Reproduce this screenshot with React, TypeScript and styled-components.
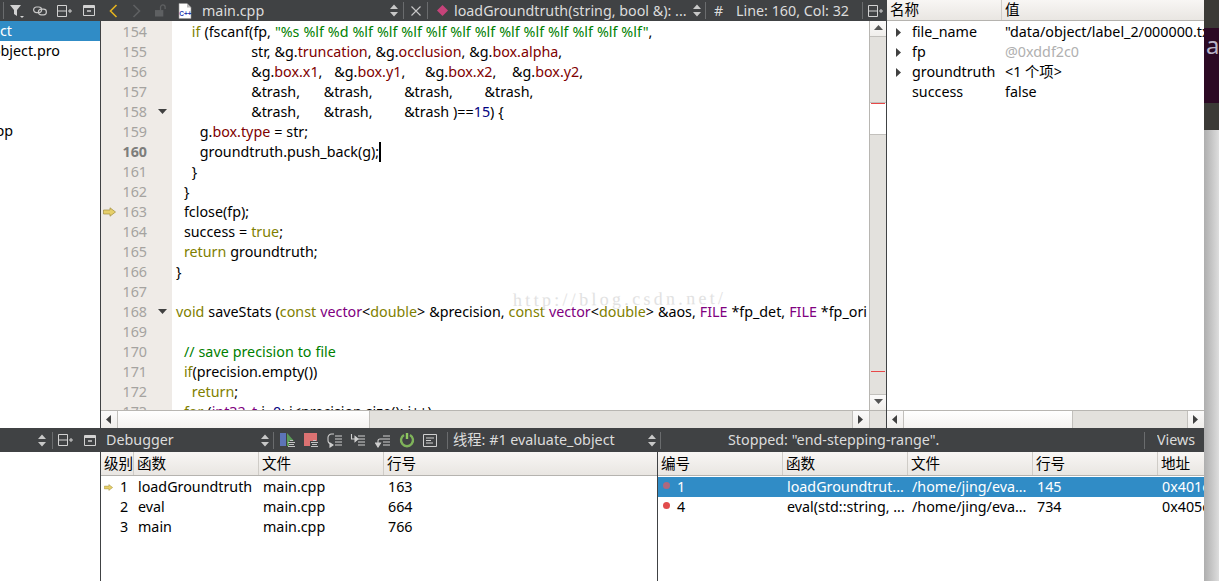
import React from "react";
import styled, { createGlobalStyle } from "styled-components";

const Global = createGlobalStyle`
  html, body { margin: 0; padding: 0; background: #fff; }
  #root { width: 1219px; height: 581px; overflow: hidden; }
  * { box-sizing: border-box; }
`;

const DARK = "#404244";
const FONT = `"Noto Sans", "Noto Sans CJK SC", sans-serif`;

const Shell = styled.div`
  display: flex;
  width: 1219px;
  height: 581px;
  overflow: hidden;
  font-family: ${FONT};
  font-size: 14.3px;
  color: #000;
`;
const Window = styled.div`
  width: 1204px;
  height: 581px;
  display: flex;
  flex-direction: column;
  position: relative;
`;
const TopRow = styled.div`
  display: flex;
  height: 428px;
`;
const BottomRow = styled.div`
  display: flex;
  flex: 1;
  min-height: 0;
`;
const Sidebar = styled.div`
  width: 101px;
  display: flex;
  flex-direction: column;
  border-right: 1px solid ${DARK};
`;
const Toolbar = styled.div<{ $h?: number }>`
  height: ${(p) => p.$h ?? 21}px;
  background: ${DARK};
  display: flex;
  align-items: center;
  color: #dcdcdc;
  flex: none;
  white-space: pre;
  line-height: 20px;
  overflow: hidden;
`;
const BottomBar = styled(Toolbar)`
  width: 1204px;
`;
const Sep = styled.span<{ $ml: number }>`
  width: 1px;
  height: 17px;
  background: #6a6c6e;
  margin-left: ${(p) => p.$ml}px;
  flex: none;
`;
const Tool = styled.span<{ $ml: number; $w: number }>`
  display: flex;
  align-items: center;
  justify-content: center;
  flex: none;
  width: ${(p) => p.$w}px;
  margin-left: ${(p) => p.$ml}px;
`;
const ToolText = styled.span<{ $ml: number; $w: number }>`
  flex: none;
  overflow: hidden;
  width: ${(p) => p.$w}px;
  margin-left: ${(p) => p.$ml}px;
`;
const ProjectRow = styled.div<{ $selected?: boolean; $pad: number }>`
  height: 20px;
  line-height: 20px;
  display: flex;
  justify-content: flex-end;
  padding-right: ${(p) => p.$pad}px;
  white-space: pre;
  overflow: hidden;
  background: ${(p) => (p.$selected ? "#308cc6" : "transparent")};
  color: ${(p) => (p.$selected ? "#fff" : "#000")};
`;

const EditorPane = styled.div`
  width: 786px;
  display: flex;
  flex-direction: column;
  border-right: 1px solid ${DARK};
`;
const EditorBody = styled.div`
  flex: 1;
  min-height: 0;
  display: flex;
`;
const CodeArea = styled.div`
  flex: 1;
  min-width: 0;
  overflow: hidden;
  padding-top: 1px;
  background: linear-gradient(90deg, #efebe7 71px, #fff 71px);
  position: relative;
`;
const CodeLine = styled.div`
  display: flex;
  height: 20px;
  line-height: 20px;
  white-space: pre;
  word-spacing: 0.24px;
`;
const Marker = styled.span`
  width: 15px;
  flex: none;
  display: flex;
  align-items: center;
  justify-content: flex-end;
`;
const LineNo = styled.span<{ $current?: boolean }>`
  width: 31px;
  flex: none;
  text-align: right;
  font-weight: ${(p) => (p.$current ? 700 : 400)};
  color: ${(p) => (p.$current ? "#7d7d7b" : "#a5a3a0")};
`;
const Fold = styled.span`
  width: 25px;
  flex: none;
  display: flex;
  align-items: center;
  justify-content: flex-end;
  padding-right: 5px;
`;
const Code = styled.span`
  padding-left: 4px;
  flex: none;
`;
const COLORS: Record<string, string> = {
  k: "#808000",
  t: "#800080",
  s: "#008000",
  m: "#800000",
  n: "#000080",
  p: "#000",
};
const Tok = styled.span<{ $c: string }>`
  color: ${(p) => COLORS[p.$c]};
`;
const Caret = styled.span`
  display: inline-block;
  width: 2px;
  height: 20px;
  margin-right: -2px;
  background: #000;
  vertical-align: top;
`;
const Watermark = styled.div`
  position: absolute;
  left: 412px;
  top: 268px;
  font-family: "Liberation Serif", serif;
  font-size: 18px;
  letter-spacing: 3.3px;
  line-height: 20px;
  color: #e2e2e2;
  white-space: pre;
  pointer-events: none;
  transform: rotate(-0.6deg);
`;
const VScroll = styled.div`
  width: 17px;
  flex: none;
  display: flex;
  flex-direction: column;
  background: #e3e1dd;
  border-left: 1px solid #b8b6b2;
  position: relative;
`;
const ScrollBtn = styled.div<{ $side: string }>`
  flex: none;
  background: linear-gradient(#fbfafa, #f0eeeb);
  display: flex;
  align-items: center;
  justify-content: center;
  ${(p) => `border-${p.$side}: 1px solid #c2c0bc;`}
  ${(p) => (p.$side === "top" || p.$side === "bottom" ? "height: 16px;" : "width: 17px;")}
`;
const VTrack = styled.div<{ $size: number }>`
  flex: ${(p) => (p.$size ? "none" : 1)};
  height: ${(p) => (p.$size ? `${p.$size}px` : "auto")};
`;
const VHandle = styled.div`
  height: 33px;
  flex: none;
  background: #fff;
  border-top: 1px solid #c2c0bc;
  border-bottom: 1px solid #c2c0bc;
`;
const Mark = styled.div<{ $top: number }>`
  position: absolute;
  left: 1px;
  right: 1px;
  height: 1px;
  top: ${(p) => p.$top}px;
  background: #e84848;
`;
const HScroll = styled.div`
  height: 18px;
  flex: none;
  display: flex;
  background: #e3e1dd;
  border-top: 1px solid #b8b6b2;
`;
const HHandle = styled.div<{ $w: number }>`
  width: ${(p) => p.$w}px;
  flex: none;
  background: linear-gradient(#fff, #f4f2f0);
  border-right: 1px solid #c2c0bc;
`;
const HTrack = styled.div`
  flex: 1;
`;
const Corner = styled.div`
  width: 17px;
  flex: none;
  border-left: 1px solid #c2c0bc;
`;

const LocalsPane = styled.div`
  width: 317px;
  display: flex;
  flex-direction: column;
`;
const TableHead = styled.div<{ $cols: string; $h: number }>`
  display: grid;
  grid-template-columns: ${(p) => p.$cols};
  height: ${(p) => p.$h}px;
  flex: none;
  background: linear-gradient(#f8f6f4, #e9e6e2);
  border-bottom: 1px solid #b5b3af;
  line-height: ${(p) => p.$h - 2}px;
  font-size: 14.6px;
`;
const HeadCell = styled.div`
  padding-left: 3px;
  border-right: 1px solid #cfccc7;
  white-space: pre;
  overflow: hidden;
  &:last-child { border-right: none; }
`;
const TableBody = styled.div`
  flex: 1;
  min-height: 0;
  overflow: hidden;
  padding-top: 1px;
`;
const Row = styled.div<{ $cols: string; $selected?: boolean }>`
  display: grid;
  grid-template-columns: ${(p) => p.$cols};
  height: 20px;
  line-height: 20px;
  white-space: pre;
  background: ${(p) => (p.$selected ? "#308cc6" : "transparent")};
  color: ${(p) => (p.$selected ? "#fff" : "#000")};
`;
const Cell = styled.div<{ $pl?: number; $dim?: boolean }>`
  padding-left: ${(p) => p.$pl ?? 4}px;
  overflow: hidden;
  display: flex;
  align-items: center;
  color: ${(p) => (p.$dim ? "#b0b0b0" : "inherit")};
`;
const Twisty = styled.span`
  display: flex;
  width: 25px;
  flex: none;
  padding-left: 8px;
`;
const StackPane = styled.div`
  width: 557px;
  display: flex;
  flex-direction: column;
  border-right: 1px solid ${DARK};
`;
const BreakPane = styled.div`
  width: 546px;
  display: flex;
  flex-direction: column;
`;
const Blank = styled.div`
  width: 101px;
  border-right: 1px solid ${DARK};
`;
const Strip = styled.div`
  width: 15px;
  height: 581px;
  flex: none;
  display: flex;
  flex-direction: column;
  overflow: hidden;
`;
const StripDark = styled.div<{ $h: number }>`
  height: ${(p) => p.$h}px;
  flex: none;
  background: #3b3a36;
`;
const StripPurple = styled.div`
  height: 75px;
  flex: none;
  background: #2c0a24;
  color: #b9b3c6;
  font-size: 24px;
  line-height: 34px;
  padding-left: 2px;
  overflow: hidden;
  white-space: pre-line;
`;
const StripLight = styled.div`
  flex: 1;
  background: linear-gradient(90deg, #aeaeae, #dddddd);
`;

/* icons */
const Updown = () => (
  <svg width="8" height="13" viewBox="0 0 8 13"><path d="M4 0.5 8 5H0zM4 12.5 0 8h8z" fill="#c8c8c8" /></svg>
);
const Split = () => (
  <svg width="15" height="14" viewBox="0 0 15 14" fill="none" stroke="#d2d2d2"><path d="M.5 1.5h9v11h-9zM.5 7h9M11 7h4M13 5v4" /></svg>
);
const Collapse = () => (
  <svg width="12" height="11" viewBox="0 0 12 11" fill="none"><path d="M.5.5h11v10H.5z" stroke="#d2d2d2" /><path d="M1 1h10v2H1z" fill="#d2d2d2" /><path d="M4 6h4" stroke="#d2d2d2" strokeWidth="1.5" /></svg>
);
const Funnel = () => (
  <svg width="14" height="14" viewBox="0 0 14 14"><path d="M0 1h11L7 6v6L4 10V6z" fill="#d2d2d2" /><path d="M10 12h4l-2 2z" fill="#d2d2d2" /></svg>
);
const Link = () => (
  <svg width="14" height="10" viewBox="0 0 14 10" fill="none" stroke="#c8c8c8" strokeWidth="1.2"><rect x=".6" y="1" width="8" height="5.6" rx="2.8" /><rect x="5.4" y="3.2" width="8" height="5.6" rx="2.8" /></svg>
);
const Chevron = ({ dir, color }: { dir: "l" | "r"; color: string }) => (
  <svg width="9" height="14" viewBox="0 0 9 14" fill="none" stroke={color} strokeWidth="1.6"><path d={dir === "l" ? "M7.5 1 1.5 7l6 6" : "M1.5 1l6 6-6 6"} /></svg>
);
const Lock = () => (
  <svg width="13" height="13" viewBox="0 0 13 13"><path d="M0 6h9v7H0z" fill="#5e6062" /><path d="M6 6V3a2.5 2.5 0 0 1 5 0v2" fill="none" stroke="#5e6062" strokeWidth="1.4" /></svg>
);
const CppDoc = () => (
  <svg width="14" height="16" viewBox="0 0 14 16"><path d="M1 .5h8l4 4v11H1z" fill="#fff" stroke="#999" strokeWidth=".6" /><path d="M9 .5v4h4z" fill="#bbb" /><text x="1.2" y="12.5" fontSize="6.5" fontWeight="700" fill="#2a3fb0" fontFamily="Liberation Sans">C++</text></svg>
);
const XIcon = () => (
  <svg width="10" height="10" viewBox="0 0 10 10" stroke="#c8c8c8" strokeWidth="1.1"><path d="M.5.5l9 9M9.5.5l-9 9" /></svg>
);
const Diamond = () => (
  <svg width="11" height="11" viewBox="0 0 11 11"><path d="M5.5 0 11 5.5 5.5 11 0 5.5z" fill="#c6437a" /></svg>
);
const Bug = ({ x, y }: { x: number; y: number }) => (
  <path transform={`translate(${x} ${y})`} d="M2 0h3v1H2zM0 2h7v1H0zM1 4h5v1H1zM0 6h7v1H0z" fill="#c4c4c4" />
);
const DbgContinue = () => (
  <svg width="16" height="16" viewBox="0 0 16 16"><path d="M0 1h6v13H0z" fill="#5d74b8" /><path d="M7 1l7 8H7z" fill="#5a9a58" /><path d="M7 9h2v5H7z" fill="#5a9a58" /><Bug x={8} y={8} /></svg>
);
const DbgStop = () => (
  <svg width="15" height="16" viewBox="0 0 15 16"><path d="M0 1h13v13H0z" fill="#dc7272" /><path d="M6 9h8v6H6z" fill={DARK} /><Bug x={7} y={8} /></svg>
);
const lines = "M8 3h7M8 6h7M8 9h7M8 12h7";
const StepOver = () => (
  <svg width="16" height="15" viewBox="0 0 16 15" fill="none" stroke="#cfcfcf" strokeWidth="1.1"><path d={lines} /><path d="M7 1H4.5A3.5 3.5 0 0 0 1 4.5V7a4 4 0 0 0 3 4" /><path d="M3 14l3-2-3-2z" fill="#cfcfcf" /></svg>
);
const StepInto = () => (
  <svg width="16" height="15" viewBox="0 0 16 15" fill="none" stroke="#cfcfcf" strokeWidth="1.1"><path d={lines} /><path d="M1.5 1v5h4" /><path d="M5 3.5 8 6 5 8.5z" fill="#cfcfcf" /></svg>
);
const StepOut = () => (
  <svg width="16" height="15" viewBox="0 0 16 15" fill="none" stroke="#cfcfcf" strokeWidth="1.1"><path d={lines} /><path d="M8 6H5a2 2 0 0 0-2 2v4" /><path d="M.5 10l2.500 4 2.500-4z" fill="#cfcfcf" /></svg>
);
const Power = () => (
  <svg width="16" height="16" viewBox="0 0 16 16" fill="none"><path d="M5 3a6 6 0 1 0 6 0" stroke="#7fb35a" strokeWidth="2.4" /><path d="M8 1v6" stroke="#8fc860" strokeWidth="2.4" /></svg>
);
const Frames = () => (
  <svg width="14" height="13" viewBox="0 0 14 13" fill="none" stroke="#cfcfcf"><path d="M.5.5h13v12H.5z" /><path d="M3 4h8M3 6.5h5M3 9h7" /></svg>
);
const Arrow = ({ dir, color = "#404040" }: { dir: "l" | "r" | "u" | "d"; color?: string }) => {
  const d = { l: "M6 0v9L1 4.5z", r: "M1 0v9l5-4.5z", u: "M0 6h9L4.5 1z", d: "M0 1h9L4.5 6z" }[dir];
  return <svg width="9" height="9" viewBox="0 0 9 9"><path d={d} fill={color} /></svg>;
};
const PointerArrow = ({ w, h }: { w: number; h: number }) => (
  <svg width={w} height={h} viewBox="0 0 13 10"><path d="M.5 3H7V.8L12.5 5 7 9.2V7H.5z" fill="#e6cf6a" stroke="#a08c3c" strokeWidth=".7" /></svg>
);
const Dot = styled.span<{ $dim?: boolean }>`
  width: 7px;
  height: 7px;
  border-radius: 50%;
  flex: none;
  margin-bottom: 3px;
  background: ${(p) => (p.$dim ? "#b0687e" : "#e24c4c")};
`;
const DotCell = styled.div`
  display: flex;
  align-items: center;
  gap: 7px;
  padding-left: 5px;
`;
const ArrowCell = styled.div`
  display: flex;
  align-items: center;
  padding-left: 3px;
  gap: 7px;
`;
const ArrowSlot = styled.span`
  width: 9px;
  flex: none;
  display: flex;
  align-items: center;
`;

type T = [string, keyof typeof COLORS];
const sp = (n: number) => " ".repeat(n);
const CODE: { n: number; t: T[]; fold?: boolean; pointer?: boolean; caret?: boolean }[] = [
  { n: 154, t: [[sp(4), "p"], ["if", "k"], [" (fscanf(fp, ", "p"], ['"%s %lf %d %lf %lf %lf %lf %lf %lf %lf %lf %lf %lf %lf %lf"', "s"], [",", "p"]] },
  { n: 155, t: [[sp(19) + "str, &g.", "p"], ["truncation", "m"], [", &g.", "p"], ["occlusion", "m"], [", &g.", "p"], ["box.alpha", "m"], [",", "p"]] },
  { n: 156, t: [[sp(19) + "&g.", "p"], ["box.x1", "m"], [",   &g.", "p"], ["box.y1", "m"], [",     &g.", "p"], ["box.x2", "m"], [",    &g.", "p"], ["box.y2", "m"], [",", "p"]] },
  { n: 157, t: [[sp(19) + "&trash,      &trash,        &trash,        &trash,", "p"]] },
  { n: 158, fold: true, t: [[sp(19) + "&trash,      &trash,        &trash )==", "p"], ["15", "n"], [") {", "p"]] },
  { n: 159, t: [[sp(6) + "g.", "p"], ["box.type", "m"], [" = str;", "p"]] },
  { n: 160, caret: true, t: [[sp(6) + "groundtruth.push_back(g);", "p"]] },
  { n: 161, t: [[sp(4) + "}", "p"]] },
  { n: 162, t: [[sp(2) + "}", "p"]] },
  { n: 163, pointer: true, t: [[sp(2) + "fclose(fp);", "p"]] },
  { n: 164, t: [[sp(2) + "success = ", "p"], ["true", "k"], [";", "p"]] },
  { n: 165, t: [[sp(2), "p"], ["return", "k"], [" groundtruth;", "p"]] },
  { n: 166, t: [["}", "p"]] },
  { n: 167, t: [] },
  { n: 168, fold: true, t: [["void", "k"], [" saveStats (", "p"], ["const", "k"], [" ", "p"], ["vector", "t"], ["<", "p"], ["double", "k"], ["> &precision, ", "p"], ["const", "k"], [" ", "p"], ["vector", "t"], ["<", "p"], ["double", "k"], ["> &aos, ", "p"], ["FILE", "t"], [" *fp_det, ", "p"], ["FILE", "t"], [" *fp_ori", "p"]] },
  { n: 169, t: [] },
  { n: 170, t: [[sp(2), "p"], ["// save precision to file", "s"]] },
  { n: 171, t: [[sp(2), "p"], ["if", "k"], ["(precision.empty())", "p"]] },
  { n: 172, t: [[sp(4), "p"], ["return", "k"], [";", "p"]] },
  { n: 173, t: [[sp(2), "p"], ["for", "k"], [" (", "p"], ["int32_t", "t"], [" i=", "p"], ["0", "n"], ["; i<precision.size(); i++)", "p"]] },
];

const STACK_COLS = "33px 125px 125px 1fr";
const STACK_ROWS = [
  { l: "1", f: "loadGroundtruth", line: "163", ptr: true },
  { l: "2", f: "eval", line: "664" },
  { l: "3", f: "main", line: "766" },
];
const BP_COLS = "125px 125px 125px 125px 1fr";
const LOCAL_COLS = "115px 1fr";
const LOCALS = [
  { n: "file_name", v: '"data/object/label_2/000000.txt"', kids: true },
  { n: "fp", v: "@0xddf2c0", kids: true, dim: true },
  { n: "groundtruth", v: "<1 个项>", kids: true },
  { n: "success", v: "false" },
];

export default function App() {
  return (
    <Shell>
      <Global />
      <Window>
        <TopRow>
          <Sidebar>
            <Toolbar>
              <Sep $ml={3} />
              <Tool $ml={6} $w={14}><Funnel /></Tool>
              <Tool $ml={9} $w={14}><Link /></Tool>
              <Tool $ml={10} $w={15}><Split /></Tool>
              <Tool $ml={11} $w={12}><Collapse /></Tool>
            </Toolbar>
            <ProjectRow $selected $pad={88}>evaluate_object</ProjectRow>
            <ProjectRow $pad={40}>evaluate_object.pro</ProjectRow>
            <ProjectRow $pad={0}> </ProjectRow>
            <ProjectRow $pad={0}> </ProjectRow>
            <ProjectRow $pad={0}> </ProjectRow>
            <ProjectRow $pad={87}>main.cpp</ProjectRow>
          </Sidebar>
          <EditorPane>
            <Toolbar>
              <Tool $ml={7} $w={10}><Chevron dir="l" color="#e3b21f" /></Tool>
              <Tool $ml={13} $w={10}><Chevron dir="r" color="#5e6062" /></Tool>
              <Tool $ml={14} $w={12}><Lock /></Tool>
              <Tool $ml={11} $w={14}><CppDoc /></Tool>
              <ToolText $ml={10} $w={186}>main.cpp</ToolText>
              <Tool $ml={2} $w={8}><Updown /></Tool>
              <Sep $ml={5} />
              <Tool $ml={7} $w={10}><XIcon /></Tool>
              <Sep $ml={6} />
              <Tool $ml={9} $w={11}><Diamond /></Tool>
              <ToolText $ml={6} $w={238}>loadGroundtruth(string, bool &amp;): ...</ToolText>
              <Tool $ml={1} $w={8}><Updown /></Tool>
              <Sep $ml={4} />
              <ToolText $ml={8} $w={10}>#</ToolText>
              <ToolText $ml={12} $w={126}>Line: 160, Col: 32</ToolText>
              <Sep $ml={0} />
              <Tool $ml={5} $w={15}><Split /></Tool>
            </Toolbar>
            <EditorBody>
              <CodeArea>
                {CODE.map((l) => (
                  <CodeLine key={l.n}>
                    <Marker>{l.pointer && <PointerArrow w={13} h={10} />}</Marker>
                    <LineNo $current={l.caret}>{l.n}</LineNo>
                    <Fold>{l.fold && <Arrow dir="d" />}</Fold>
                    <Code>
                      {l.t.map((t, i) => (
                        <Tok key={i} $c={t[1]}>{t[0]}</Tok>
                      ))}
                      {l.caret && <Caret />}
                    </Code>
                  </CodeLine>
                ))}
                <Watermark>http://blog.csdn.net/</Watermark>
              </CodeArea>
              <VScroll>
                <ScrollBtn $side="bottom"><Arrow dir="u" color="#555" /></ScrollBtn>
                <VTrack $size={65} />
                <VHandle />
                <VTrack $size={0} />
                <ScrollBtn $side="top"><Arrow dir="d" color="#555" /></ScrollBtn>
                <Mark $top={82} />
                <Mark $top={350} />
              </VScroll>
            </EditorBody>
            <HScroll>
              <ScrollBtn $side="right"><Arrow dir="l" /></ScrollBtn>
              <HHandle $w={252} />
              <HTrack />
              <ScrollBtn $side="left"><Arrow dir="r" /></ScrollBtn>
              <Corner />
            </HScroll>
          </EditorPane>
          <LocalsPane>
            <TableHead $cols={LOCAL_COLS} $h={21}>
              <HeadCell>名称</HeadCell>
              <HeadCell>值</HeadCell>
            </TableHead>
            <TableBody>
              {LOCALS.map((r) => (
                <Row key={r.n} $cols={LOCAL_COLS}>
                  <Cell $pl={0}><Twisty>{r.kids && <Arrow dir="r" />}</Twisty>{r.n}</Cell>
                  <Cell $pl={3} $dim={r.dim}>{r.v}</Cell>
                </Row>
              ))}
            </TableBody>
            <HScroll>
              <ScrollBtn $side="right"><Arrow dir="l" /></ScrollBtn>
              <HHandle $w={169} />
              <HTrack />
              <ScrollBtn $side="left"><Arrow dir="r" /></ScrollBtn>
            </HScroll>
          </LocalsPane>
        </TopRow>
        <BottomBar $h={24}>
          <Tool $ml={38} $w={8}><Updown /></Tool>
          <Sep $ml={6} />
          <Tool $ml={5} $w={15}><Split /></Tool>
          <Tool $ml={11} $w={12}><Collapse /></Tool>
          <ToolText $ml={10} $w={155}>Debugger</ToolText>
          <Tool $ml={0} $w={8}><Updown /></Tool>
          <Sep $ml={4} />
          <Tool $ml={6} $w={16}><DbgContinue /></Tool>
          <Tool $ml={8} $w={15}><DbgStop /></Tool>
          <Tool $ml={8} $w={16}><StepOver /></Tool>
          <Tool $ml={7} $w={16}><StepInto /></Tool>
          <Tool $ml={9} $w={16}><StepOut /></Tool>
          <Tool $ml={8} $w={16}><Power /></Tool>
          <Tool $ml={8} $w={14}><Frames /></Tool>
          <Sep $ml={10} />
          <ToolText $ml={5} $w={195}>线程: #1 evaluate_object</ToolText>
          <Tool $ml={0} $w={8}><Updown /></Tool>
          <Sep $ml={4} />
          <ToolText $ml={67} $w={416}>Stopped: "end-stepping-range".</ToolText>
          <Sep $ml={0} />
          <ToolText $ml={12} $w={44}>Views</ToolText>
        </BottomBar>
        <BottomRow>
          <Blank />
          <StackPane>
            <TableHead $cols={STACK_COLS} $h={24}>
              <HeadCell>级别</HeadCell>
              <HeadCell>函数</HeadCell>
              <HeadCell>文件</HeadCell>
              <HeadCell>行号</HeadCell>
            </TableHead>
            <TableBody>
              {STACK_ROWS.map((r) => (
                <Row key={r.l} $cols={STACK_COLS}>
                  <ArrowCell>
                    <ArrowSlot>{r.ptr && <PointerArrow w={9} h={7} />}</ArrowSlot>
                    {r.l}
                  </ArrowCell>
                  <Cell>{r.f}</Cell>
                  <Cell>main.cpp</Cell>
                  <Cell>{r.line}</Cell>
                </Row>
              ))}
            </TableBody>
          </StackPane>
          <BreakPane>
            <TableHead $cols={BP_COLS} $h={24}>
              <HeadCell>编号</HeadCell>
              <HeadCell>函数</HeadCell>
              <HeadCell>文件</HeadCell>
              <HeadCell>行号</HeadCell>
              <HeadCell>地址</HeadCell>
            </TableHead>
            <TableBody>
              <Row $cols={BP_COLS} $selected>
                <DotCell><Dot $dim />1</DotCell>
                <Cell>loadGroundtrut...</Cell>
                <Cell>/home/jing/eva...</Cell>
                <Cell>145</Cell>
                <Cell>0x401c</Cell>
              </Row>
              <Row $cols={BP_COLS}>
                <DotCell><Dot />4</DotCell>
                <Cell>eval(std::string, ...</Cell>
                <Cell>/home/jing/eva...</Cell>
                <Cell>734</Cell>
                <Cell>0x405c</Cell>
              </Row>
            </TableBody>
          </BreakPane>
        </BottomRow>
      </Window>
      <Strip>
        <StripDark $h={28} />
        <StripPurple>{"a\n\ne"}</StripPurple>
        <StripDark $h={27} />
        <StripLight />
      </Strip>
    </Shell>
  );
}
